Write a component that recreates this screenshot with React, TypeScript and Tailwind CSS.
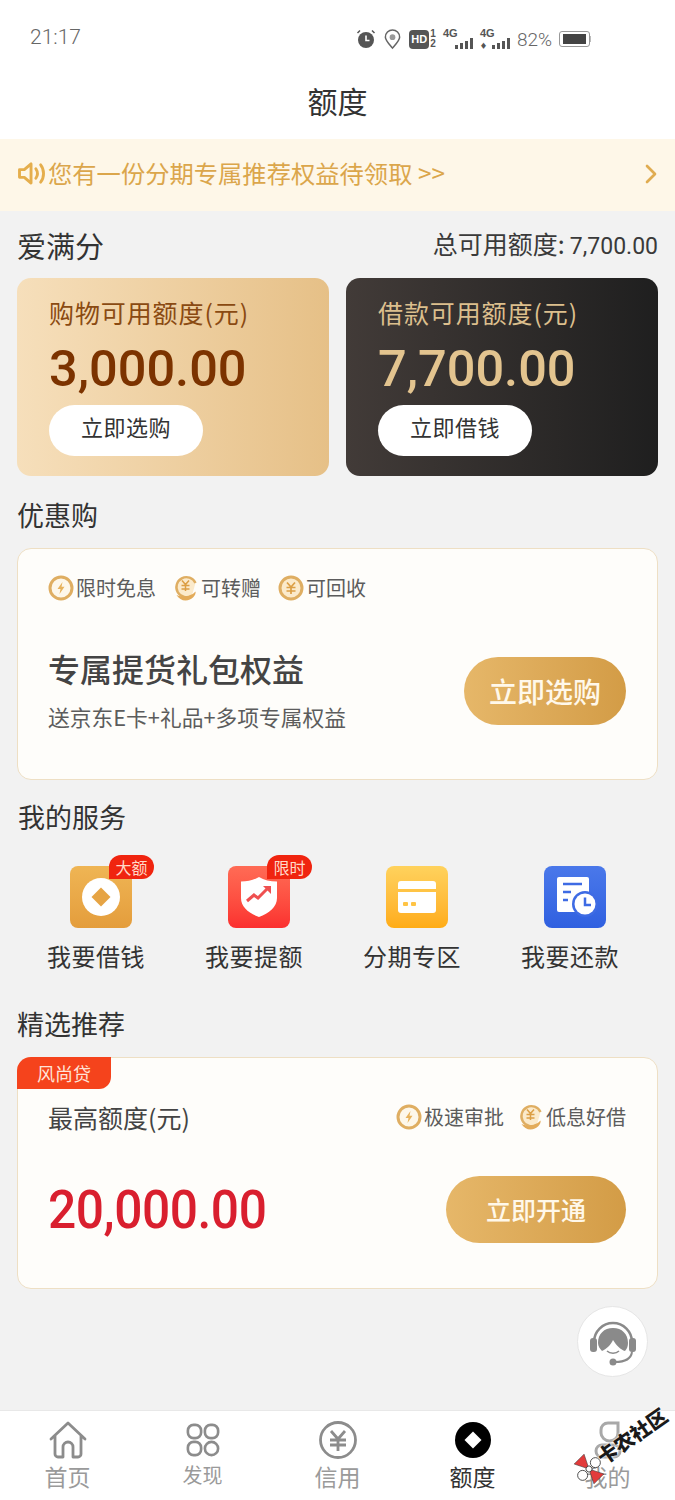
import type { ReactNode } from 'react'
import { ChevronRight } from 'lucide-react'

const CJK = "font-['Noto_Sans_CJK_SC','Liberation_Sans',sans-serif]"

function Bolt() {
  return (
    <svg viewBox="0 0 26 26" className="size-[26px] shrink-0">
      <circle cx="13" cy="13" r="11" fill="#fdf7ea" stroke="#dfae62" strokeWidth="3" />
      <path d="M14.5 7 9.5 14h3l-1 5 5-7.2h-3z" fill="#e7b25c" />
    </svg>
  )
}

function Coin() {
  return (
    <svg viewBox="0 0 26 26" className="size-[26px] shrink-0">
      <circle cx="13" cy="13" r="11" fill="#fbeacb" stroke="#dfae62" strokeWidth="3" />
      <path d="M9 7.5 13 12l4-4.500M8.500 12.500h9M8.500 16h9M13 12v7" fill="none" stroke="#dc9f45" strokeWidth="1.700" />
    </svg>
  )
}

function HandCoin() {
  return (
    <svg viewBox="0 0 26 28" className="h-[28px] w-[26px] shrink-0">
      <path d="M19 21.500A10 10 0 1 1 22.500 9" fill="#fbeacb" stroke="#dfae62" strokeWidth="2.400" />
      <path d="M9 6.500 12.500 10.500 16 6.500M8.500 11.500h8M8.500 15h8M12.500 11v6" fill="none" stroke="#dc9f45" strokeWidth="1.500" />
      <path d="M3.500 21c3 1 5 1.500 8 1.500 4 0 8-1.500 11-5 1 3-3.500 9-10 9-3.500 0-7-2-9-5.500z" fill="#e3ab59" />
    </svg>
  )
}

function Tag({ icon, children }: { icon: ReactNode; children: ReactNode }) {
  return (
    <div className="flex items-center gap-[2px] text-[20px] leading-none text-[#5c5c5c]">
      {icon}
      <span>{children}</span>
    </div>
  )
}

function SectionTitle({ children }: { children: ReactNode }) {
  return <div className="text-[27px] leading-none text-[#333]">{children}</div>
}

function ServiceItem({ label, badge, icon }: { label: string; badge?: string; icon: ReactNode }) {
  return (
    <div className="flex flex-col items-center">
      <div className="relative size-[62px]">
        {icon}
        {badge && (
          <span className="absolute left-[39px] top-[-11px] flex h-[24px] w-[45px] items-center justify-center rounded-[12px] rounded-bl-none bg-[#f0240f] text-[16px] leading-none text-[#ffd9c9]">
            {badge}
          </span>
        )}
      </div>
      <span className="mr-[10px] mt-[15px] text-[24px] leading-[26px] tracking-[0.5px] text-[#333]">{label}</span>
    </div>
  )
}

function TabItem({ label, icon, active, textClass = 'mt-[4px] text-[23px]' }: { label: string; icon: ReactNode; active?: boolean; textClass?: string }) {
  return (
    <div className="flex flex-1 flex-col items-center pt-[10px]">
      <div className="flex h-[38px] items-center justify-center">{icon}</div>
      <span className={`leading-[26px] ${textClass} ${active ? 'text-[#333]' : 'text-[#9a9a9a]'}`}>{label}</span>
    </div>
  )
}

function Signal({ arrows }: { arrows?: boolean }) {
  const bars = [4, 6, 8, 11]
  return (
    <div className="relative h-[22px] w-[30px]">
      <span className="absolute left-0 top-0 font-['Liberation_Sans',sans-serif] text-[11px] font-bold leading-[11px] text-[#555]">4G</span>
      {arrows && <span className="absolute bottom-[1px] left-0 text-[7px] leading-[7px] text-[#555]">♦</span>}
      <div className="absolute bottom-[1px] right-0 flex items-end gap-[2px]">
        {bars.map((h) => (
          <div key={h} className="w-[3px] bg-[#555]" style={{ height: h }} />
        ))}
      </div>
    </div>
  )
}

function StatusBar() {
  return (
    <div className="flex h-[68px] items-start justify-between pl-[30px] pr-[84px] text-[#666]">
      <span className="pt-[24px] font-['Roboto',sans-serif] text-[21px] font-light leading-[26px]">21:17</span>
      <div className="flex items-center gap-[7px] pt-[28px]">
        <svg viewBox="0 0 20 20" className="size-[20px]">
          <circle cx="10" cy="11" r="8" fill="#555" />
          <path d="M10 6.500V11.500h3.500" fill="none" stroke="#fff" strokeWidth="1.600" />
          <path d="M1.500 4 4 1.500M18.500 4 16 1.500" stroke="#555" strokeWidth="1.500" />
        </svg>
        <svg viewBox="0 0 20 22" className="h-[21px] w-[19px]">
          <path d="M10 20C5 14 2.500 11.500 2.500 8.500a7.500 7.500 0 0 1 15 0C17.500 11.500 15 14 10 20z" fill="none" stroke="#666" strokeWidth="1.600" />
          <circle cx="10" cy="8.500" r="3" fill="#999" />
        </svg>
        <div className="flex items-center gap-[1px]">
          <span className="flex h-[19px] w-[20px] items-center justify-center rounded-[4px] bg-[#555] font-['Liberation_Sans',sans-serif] text-[11px] font-bold leading-none text-white">HD</span>
          <span className="flex flex-col font-['Liberation_Sans',sans-serif] text-[10px] font-bold leading-[10px] text-[#555]">
            <span>1</span>
            <span>2</span>
          </span>
        </div>
        <Signal />
        <Signal arrows />
        <span className="font-['Roboto',sans-serif] text-[19px] font-light leading-none">82%</span>
        <div className="flex items-center">
          <div className="flex h-[16px] w-[31px] items-center rounded-[3px] border border-[#999] px-[3px]">
            <div className="h-[10px] w-[23px] bg-[#444]" />
          </div>
          <div className="h-[6px] w-[1px] bg-[#bbb]" />
        </div>
      </div>
    </div>
  )
}

export default function App() {
  return (
    <div className={`relative flex h-[1500px] w-[675px] flex-col overflow-hidden bg-[#f2f2f2] ${CJK}`}>
      <div className="bg-white">
        <StatusBar />
        <div className="flex h-[71px] items-start justify-center pt-[14px] text-[30px] leading-[36px] text-[#333]">额度</div>
      </div>

      <div className="flex h-[72px] items-center justify-between bg-[#fef7e8] pb-[3px] pl-[16px] pr-[8px] text-[#dba64b]">
        <div className="flex items-center">
          <svg viewBox="0 0 32 26" className="h-[25px] w-[32px]">
            <path d="M3 9h5l7-6v20l-7-6H3z" fill="none" stroke="#e5ae4c" strokeWidth="3" strokeLinejoin="round" />
            <path d="M20 8c2 3 2 7 0 10M25 4c4 5 4 13 0 18" fill="none" stroke="#e5ae4c" strokeWidth="3" strokeLinecap="round" />
          </svg>
          <span className="text-[24.300px] leading-none">您有一份分期专属推荐权益待领取 &gt;&gt;</span>
        </div>
        <ChevronRight size={32} strokeWidth={2} className="text-[#e0ac50]" />
      </div>

      <div className="flex h-[67px] items-start justify-between px-[17px] pt-[18px]">
        <span className="text-[29px] leading-[32px] text-[#333]">爱满分</span>
        <span className="text-[23px] leading-[28px] text-[#3a3a3a]">
          <span className="text-[25px]">总可用额度:</span> <span className="font-['Roboto',sans-serif] font-normal">7,700.00</span>
        </span>
      </div>

      <div className="flex gap-[17px] px-[17px]">
        <div className="h-[198px] flex-1 rounded-[14px] bg-gradient-to-r from-[#f6dfbb] to-[#e6c087] pl-[32px] pt-[19px]">
          <div className="text-[25px] leading-[30px] tracking-[0.9px] text-[#8a4a12]">购物可用额度(元)</div>
          <div className="mt-[14px] font-['Roboto',sans-serif] text-[50.500px] font-medium leading-[56px] text-[#7c3300]">3,000.00</div>
          <div className="mt-[8px] flex h-[51px] w-[154px] items-center justify-center rounded-full bg-white pb-[8px] text-[22px] tracking-[0.5px] text-[#333]">立即选购</div>
        </div>
        <div className="h-[198px] flex-1 rounded-[14px] bg-gradient-to-r from-[#423b38] to-[#1f1f1f] pl-[32px] pt-[19px]">
          <div className="text-[25px] leading-[30px] tracking-[0.9px] text-[#dcbf8d]">借款可用额度(元)</div>
          <div className="mt-[14px] font-['Roboto',sans-serif] text-[50.500px] font-medium leading-[56px] text-[#e3c48f]">7,700.00</div>
          <div className="mt-[8px] flex h-[51px] w-[154px] items-center justify-center rounded-full bg-white pb-[8px] text-[22px] tracking-[0.5px] text-[#333]">立即借钱</div>
        </div>
      </div>

      <div className="mb-[20px] mt-[25px] pl-[17px]"><SectionTitle>优惠购</SectionTitle></div>

      <div className="mx-[17px] flex h-[232px] flex-col rounded-[14px] border border-[#eedfc4] bg-[#fefdfa] pl-[30px] pr-[31px] pt-[25px]">
        <div className="flex items-center gap-[17px]">
          <Tag icon={<Bolt />}>限时免息</Tag>
          <Tag icon={<HandCoin />}>可转赠</Tag>
          <Tag icon={<Coin />}>可回收</Tag>
        </div>
        <div className="mt-[34px] flex items-start justify-between">
          <div>
            <div className="mt-[12px] text-[32px] font-medium leading-[40px] text-[#444]">专属提货礼包权益</div>
            <div className="mt-[15px] text-[21.750px] leading-[28px] text-[#5c5c5c]">送京东E卡+礼品+多项专属权益</div>
          </div>
          <div className="mt-[21px] flex h-[68px] w-[162px] items-center justify-center rounded-full bg-gradient-to-r from-[#e6b769] to-[#d39c46] text-[28px] font-medium text-[#fff8ea]">立即选购</div>
        </div>
      </div>

      <div className="mb-[36px] mt-[23px] pl-[18px]"><SectionTitle>我的服务</SectionTitle></div>

      <div className="grid grid-cols-[repeat(4,158px)] pl-[22px]">
        <ServiceItem
          label="我要借钱"
          badge="大额"
          icon={
            <div className="flex size-[62px] items-center justify-center rounded-[8px] bg-gradient-to-b from-[#efb554] to-[#e49d3c]">
              <svg viewBox="0 0 38 38" className="size-[38px]">
                <circle cx="19" cy="19" r="19" fill="#fff" />
                <path d="M19 9.500 28.500 19 19 28.500 9.500 19z" fill="#e6a444" />
              </svg>
            </div>
          }
        />
        <ServiceItem
          label="我要提额"
          badge="限时"
          icon={
            <div className="flex size-[62px] items-center justify-center rounded-[8px] bg-gradient-to-b from-[#ff6b55] to-[#fb2f2f]">
              <svg viewBox="0 0 36 40" className="h-[40px] w-[36px]">
                <path d="M18 0c5 3 11 4.500 18 4.500V21c0 9-8 15.500-18 19C8 36.500 0 30 0 21V4.500C7 4.500 13 3 18 0z" fill="#fff" />
                <path d="M6 24l7-6 4 3 9-9" fill="none" stroke="#ef5050" strokeWidth="3" />
                <path d="M22 9h8v8z" fill="#ef5050" />
              </svg>
            </div>
          }
        />
        <ServiceItem
          label="分期专区"
          icon={
            <div className="flex size-[62px] items-center justify-center rounded-[8px] bg-gradient-to-b from-[#ffd25c] to-[#ffac14]">
              <svg viewBox="0 0 38 32" className="h-[32px] w-[38px]">
                <rect width="38" height="32" rx="3" fill="#fff" />
                <rect y="8" width="38" height="3" fill="#ffc445" />
                <rect x="5" y="21" width="5" height="4" rx="1" fill="#ffc445" />
                <rect x="13" y="21" width="5" height="4" rx="1" fill="#ffc445" />
              </svg>
            </div>
          }
        />
        <ServiceItem
          label="我要还款"
          icon={
            <div className="flex size-[62px] items-center justify-center rounded-[8px] bg-gradient-to-b from-[#4a78ea] to-[#3060e0]">
              <svg viewBox="0 0 42 40" className="ml-[3px] h-[40px] w-[42px]">
                <rect x="1" y="0" width="32" height="35" rx="2" fill="#fff" />
                <path d="M7 7h19M7 15h8M7 23h5" stroke="#3e6be4" strokeWidth="2.500" />
                <circle cx="29" cy="27" r="13" fill="#3e6be4" />
                <circle cx="29" cy="27" r="10.500" fill="#fff" />
                <path d="M29 20.500V28h6" fill="none" stroke="#3e6be4" strokeWidth="2.500" />
              </svg>
            </div>
          }
        />
      </div>

      <div className="mb-[20px] mt-[41px] pl-[17px]"><SectionTitle>精选推荐</SectionTitle></div>

      <div className="relative mx-[17px] h-[232px] rounded-[14px] border border-[#eedfc4] bg-[#fefdfa] pl-[30px] pr-[31px]">
        <span className="absolute left-[-1px] top-[-1px] flex h-[32px] w-[94px] items-center justify-center rounded-tl-[14px] rounded-br-[12px] bg-[#f5431c] text-[18px] leading-none text-[#ffe3d8]">风尚贷</span>
        <div className="flex items-center justify-between pt-[43px]">
          <span className="text-[25px] leading-[32px] text-[#444]">最高额度(元)</span>
          <div className="flex items-center gap-[14px]">
            <Tag icon={<Bolt />}>极速审批</Tag>
            <Tag icon={<HandCoin />}>低息好借</Tag>
          </div>
        </div>
        <div className="mt-[43px] flex items-center justify-between">
          <span className="origin-left scale-x-[0.92] font-['Roboto',sans-serif] text-[54px] font-medium leading-[66px] tracking-[-0.5px] text-[#d91f2e]">20,000.00</span>
          <div className="flex h-[67px] w-[180px] items-center justify-center rounded-full bg-gradient-to-r from-[#e6b769] to-[#d39c46] text-[25px] font-medium text-[#fff8ea]">立即开通</div>
        </div>
      </div>

      <div className="absolute left-[577px] top-[1306px] flex size-[71px] items-center justify-center rounded-full border border-[#e6e6e6] bg-white">
        <svg viewBox="0 0 48 48" className="size-[48px]">
          <path d="M5 24a19 19 0 0 1 38 0" fill="none" stroke="#8a8a8a" strokeWidth="2.500" />
          <path d="M9 25c0-9 6-15 15-15s15 6 15 15c0 3-1 6-3 8-4-1-9-6-12-11-2 5-7 9-11 11-2-2-4-5-4-8z" fill="#8a8a8a" />
          <rect x="1" y="20" width="7" height="14" rx="3" fill="#8a8a8a" />
          <rect x="40" y="20" width="7" height="14" rx="3" fill="#8a8a8a" />
          <path d="M18 33c3 3 9 3 12 0" fill="none" stroke="#8a8a8a" strokeWidth="1.500" />
          <path d="M43 34c-1 7-8 10-17 10" fill="none" stroke="#8a8a8a" strokeWidth="2" />
          <circle cx="24" cy="44" r="3.500" fill="#8a8a8a" />
        </svg>
      </div>

      <div className="mt-auto flex h-[90px] border-t border-[#e8e8e8] bg-white">
        <TabItem
          label="首页"
          icon={
            <svg viewBox="0 0 38 38" className="size-[38px]">
              <path d="M2 18 19 2l17 16M6 15v18a3 3 0 0 0 3 3h5V26a5 5 0 0 1 10 0v10h5a3 3 0 0 0 3-3V15" fill="none" stroke="#8c8c8c" strokeWidth="2.800" strokeLinejoin="round" strokeLinecap="round" />
            </svg>
          }
        />
        <TabItem
          label="发现"
          textClass="mt-[3px] text-[20px]"
          icon={
            <svg viewBox="0 0 36 36" className="size-[34px]">
              <rect x="2" y="2" width="14" height="14" rx="6" fill="none" stroke="#8c8c8c" strokeWidth="2.800" />
              <rect x="20" y="2" width="14" height="14" rx="6" fill="none" stroke="#8c8c8c" strokeWidth="2.800" />
              <rect x="2" y="20" width="14" height="14" rx="6" fill="none" stroke="#8c8c8c" strokeWidth="2.800" />
              <circle cx="27" cy="27" r="7" fill="none" stroke="#8c8c8c" strokeWidth="2.800" />
            </svg>
          }
        />
        <TabItem
          label="信用"
          icon={
            <svg viewBox="0 0 38 38" className="size-[38px]">
              <circle cx="19" cy="19" r="17.500" fill="none" stroke="#8c8c8c" strokeWidth="2.800" />
              <path d="M12 10l7 8 7-8M11 19h16M11 24h16M19 18v12" fill="none" stroke="#8c8c8c" strokeWidth="2.800" />
            </svg>
          }
        />
        <TabItem
          label="额度"
          active
          icon={
            <svg viewBox="0 0 36 36" className="size-[36px]">
              <circle cx="18" cy="18" r="18" fill="#000" />
              <path d="M18 9.500 26.500 18 18 26.500 9.500 18z" fill="#fff" />
            </svg>
          }
        />
        <TabItem
          label="我的"
          icon={
            <svg viewBox="0 0 30 38" className="h-[38px] w-[30px]">
              <path d="M8 9c0-4 3-7 7-7h10v10c0 5-4 8-8.500 8S8 16 8 12z" fill="none" stroke="#a8a8a8" strokeWidth="3" />
              <path d="M3 30c0-4 3-6 6-6h12c3 0 6 2 6 6s-3 6-6 6H9c-3 0-6-2-6-6z" fill="none" stroke="#a8a8a8" strokeWidth="3" />
            </svg>
          }
        />
      </div>

      {/* forum watermark over the tab bar */}
      <div className="absolute left-[574px] top-[1454px] size-[30px] rotate-[45deg]">
        <svg viewBox="0 0 30 30" className="size-[30px]">
          <path d="M15 15 1 8v14z" fill="#e23b3b" stroke="#333" strokeWidth="0.500" />
          <path d="M15 15 29 8v14z" fill="#e23b3b" stroke="#333" strokeWidth="0.500" />
          <circle cx="15" cy="6" r="5" fill="#fff" stroke="#333" strokeWidth="0.800" />
          <circle cx="15" cy="24" r="5" fill="#fff" stroke="#333" strokeWidth="0.800" />
          <circle cx="15" cy="15" r="3" fill="#fff" stroke="#333" strokeWidth="0.800" />
        </svg>
      </div>
      <div className="absolute left-[592px] top-[1426px] rotate-[-35deg] whitespace-nowrap text-[20px] font-black leading-none text-[#1a1a1a] [text-shadow:0_0_2px_#fff,0_0_2px_#fff]">卡农社区</div>
    </div>
  )
}
